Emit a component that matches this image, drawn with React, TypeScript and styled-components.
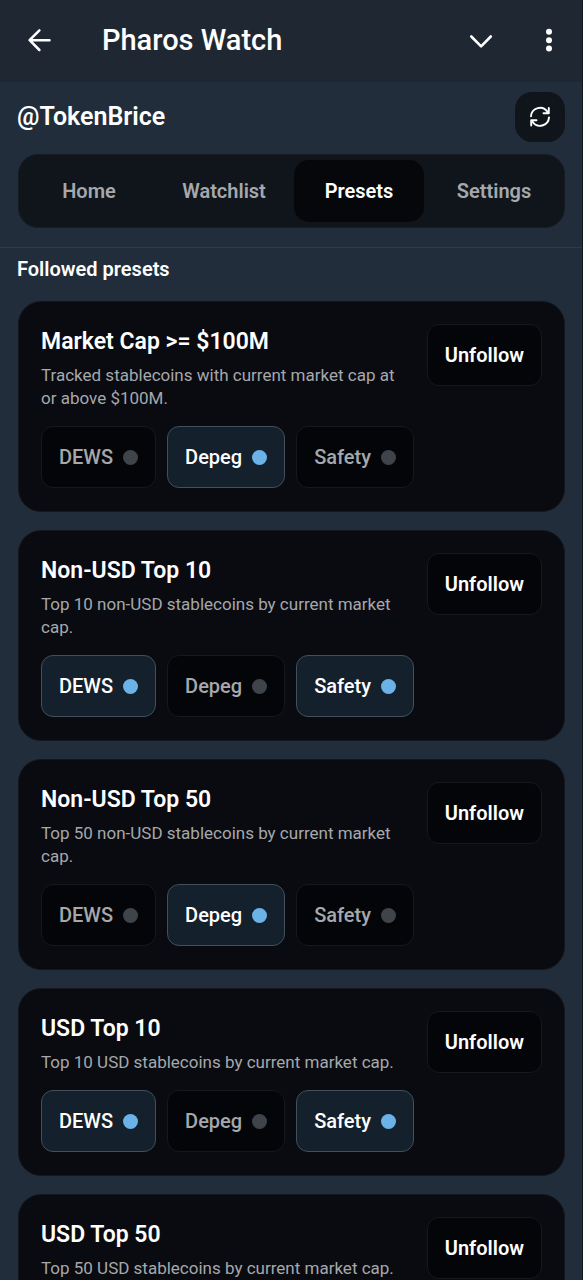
import React, { useState } from "react";
import styled, { createGlobalStyle } from "styled-components";

const GlobalStyle = createGlobalStyle`
  *, *::before, *::after { box-sizing: border-box; }
  body { margin: 0; background: #212d3a; }
  button { font: inherit; color: inherit; border: 0; cursor: pointer; }
  h1, h2, h3, p { margin: 0; }
`;

const Page = styled.div`
  display: flex;
  flex-direction: column;
  height: 100vh;
  overflow: hidden;
  border-right: 1px solid #10161d;
  background: #212d3a;
  color: #fff;
  font-family: Roboto, "Liberation Sans", sans-serif;
`;

const TitleBar = styled.header`
  display: flex;
  flex: none;
  align-items: center;
  height: 82px;
  padding: 0 16px 2px 22px;
  background: #1f2832;
`;

const BarTitle = styled.h1`
  flex: 1;
  padding-left: 46px;
  font-size: 29px;
  line-height: 36px;
  font-weight: 500;
`;

const IconButton = styled.button<{ $gap?: number }>`
  display: grid;
  place-items: center;
  width: 34px;
  height: 34px;
  margin-left: ${({ $gap = 0 }) => $gap}px;
  padding: 0;
  background: none;
`;

const AppHeader = styled.div`
  display: flex;
  flex: none;
  flex-direction: column;
  gap: 12px;
  padding: 10px 17px 19px;
  border-bottom: 1px solid #313b46;
`;

const AccountRow = styled.div`
  display: flex;
  align-items: center;
  justify-content: space-between;
`;

const Account = styled.h2`
  font-size: 25px;
  line-height: 32px;
  font-weight: 600;
`;

const RefreshButton = styled.button`
  display: grid;
  place-items: center;
  width: 50px;
  height: 50px;
  padding: 0;
  border-radius: 17px;
  background: #0f151b;
`;

const Tabs = styled.nav`
  display: grid;
  grid-template-columns: repeat(4, 1fr);
  gap: 5px;
  margin-left: 1px;
  padding: 5px;
  border: 1px solid #151c23;
  border-radius: 20px;
  background: #0f151b;
`;

const Tab = styled.button<{ $active: boolean }>`
  height: 62px;
  padding: 0;
  border-radius: 15px;
  background: ${({ $active }) => ($active ? "#06070b" : "transparent")};
  color: ${({ $active }) => ($active ? "#fff" : "#a5a8ac")};
  font-size: 20px;
  font-weight: 600;
`;

const Content = styled.main`
  flex: 1;
  min-height: 0;
  padding: 8px 17px 18px;
  overflow-y: auto;
  scrollbar-width: none;
`;

const SectionTitle = styled.h2`
  margin-bottom: 19px;
  font-size: 20px;
  line-height: 26px;
  font-weight: 600;
`;

const CardList = styled.div`
  display: flex;
  flex-direction: column;
  gap: 18px;
  padding-left: 1px;
`;

const Card = styled.article`
  display: flex;
  flex-direction: column;
  gap: 16px;
  padding: 22px 22px 23px;
  border: 1px solid #14171d;
  border-radius: 23px;
  background: #0a0b10;
`;

const CardTop = styled.div`
  display: flex;
  align-items: flex-start;
  justify-content: space-between;
  gap: 17px;
`;

const CardTitle = styled.h3`
  margin-bottom: 5px;
  font-size: 23px;
  line-height: 35px;
  font-weight: 600;
`;

const Description = styled.p`
  color: #a5a8ac;
  font-size: 17px;
  line-height: 23px;
`;

const Button = styled.button<{ $on?: boolean; $muted?: boolean }>`
  display: flex;
  flex: none;
  align-items: center;
  gap: 10px;
  height: 62px;
  padding: 0 17px;
  border: 1px solid ${({ $on }) => ($on ? "#40505d" : "#17181d")};
  border-radius: 12px;
  background: ${({ $on }) => ($on ? "#14202b" : "#040508")};
  color: ${({ $muted }) => ($muted ? "#a5a8ac" : "#fff")};
  font-size: 20px;
  font-weight: 500;
`;

const StrongButton = styled(Button)`
  font-weight: 600;
`;

const Chips = styled.div`
  display: flex;
  flex-wrap: wrap;
  gap: 11px;
`;

const Dot = styled.span<{ $on: boolean }>`
  width: 15px;
  height: 15px;
  border-radius: 50%;
  background: ${({ $on }) => ($on ? "#6ab2e8" : "#3f434a")};
`;

const alertKinds = ["DEWS", "Depeg", "Safety"];
const tabNames = ["Home", "Watchlist", "Presets", "Settings"];

type Preset = { title: string; text: string; alerts?: string[] };

const presets: Preset[] = [
  {
    title: "Market Cap >= $100M",
    text: "Tracked stablecoins with current market cap at or above $100M.",
    alerts: ["Depeg"],
  },
  {
    title: "Non-USD Top 10",
    text: "Top 10 non-USD stablecoins by current market cap.",
    alerts: ["DEWS", "Safety"],
  },
  {
    title: "Non-USD Top 50",
    text: "Top 50 non-USD stablecoins by current market cap.",
    alerts: ["Depeg"],
  },
  {
    title: "USD Top 10",
    text: "Top 10 USD stablecoins by current market cap.",
    alerts: ["DEWS", "Safety"],
  },
  {
    title: "USD Top 50",
    text: "Top 50 USD stablecoins by current market cap.",
  },
];

function AlertChips({ initial }: { initial: string[] }) {
  const [alerts, setAlerts] = useState(initial);
  const toggle = (kind: string) =>
    setAlerts((now) =>
      now.includes(kind) ? now.filter((k) => k !== kind) : [...now, kind]
    );

  return (
    <Chips>
      {alertKinds.map((kind) => {
        const on = alerts.includes(kind);
        return (
          <Button
            key={kind}
            type="button"
            aria-pressed={on}
            $on={on}
            $muted={!on}
            onClick={() => toggle(kind)}
          >
            {kind}
            <Dot $on={on} />
          </Button>
        );
      })}
    </Chips>
  );
}

function PresetCard({ preset }: { preset: Preset }) {
  return (
    <Card>
      <CardTop>
        <div>
          <CardTitle>{preset.title}</CardTitle>
          <Description>{preset.text}</Description>
        </div>
        <StrongButton type="button">Unfollow</StrongButton>
      </CardTop>
      {preset.alerts && <AlertChips initial={preset.alerts} />}
    </Card>
  );
}

export default function App() {
  const [tab, setTab] = useState("Presets");

  return (
    <>
      <GlobalStyle />
      <Page>
        <TitleBar>
          <IconButton type="button" aria-label="Back">
            <svg width="24" height="24" viewBox="0 0 24 24" fill="none" stroke="#fff" strokeWidth="2.5" strokeLinecap="round" strokeLinejoin="round">
              <path d="M22.5 12.2H2.8M12.4 2.4L2.6 12.2l9.8 9.8" />
            </svg>
          </IconButton>
          <BarTitle>Pharos Watch</BarTitle>
          <IconButton type="button" aria-label="Minimize">
            <svg width="24" height="24" viewBox="0 0 24 24" fill="none" stroke="#fff" strokeWidth="2.6" strokeLinecap="round" strokeLinejoin="round">
              <path d="M2.3 8.5l9.8 9.8 9.7-9.8" />
            </svg>
          </IconButton>
          <IconButton type="button" aria-label="More options" $gap={34}>
            <svg width="24" height="24" viewBox="0 0 24 24" fill="#fff">
              <circle cx="12" cy="3.8" r="3" />
              <circle cx="12" cy="12.2" r="3" />
              <circle cx="12" cy="20.6" r="3" />
            </svg>
          </IconButton>
        </TitleBar>

        <AppHeader>
          <AccountRow>
            <Account>@TokenBrice</Account>
            <RefreshButton type="button" aria-label="Refresh">
              <svg width="22" height="22" viewBox="0 0 22 22" fill="none" stroke="#fff" strokeWidth="1.9" strokeLinecap="round" strokeLinejoin="round">
                <path d="M2 10.2a9 9 0 0 1 16.6-4.2L19.6 7.2M19.8 2v5.3h-5.3" />
                <path d="M20 11.4a9 9 0 0 1-16.6 4.2L2.4 14.4M2.2 19.6v-5.3h5.3" />
              </svg>
            </RefreshButton>
          </AccountRow>
          <Tabs aria-label="Sections">
            {tabNames.map((name) => (
              <Tab
                key={name}
                type="button"
                $active={name === tab}
                aria-current={name === tab ? "page" : undefined}
                onClick={() => setTab(name)}
              >
                {name}
              </Tab>
            ))}
          </Tabs>
        </AppHeader>

        <Content>
          <SectionTitle>Followed presets</SectionTitle>
          <CardList>
            {presets.map((preset) => (
              <PresetCard key={preset.title} preset={preset} />
            ))}
          </CardList>
        </Content>
      </Page>
    </>
  );
}
